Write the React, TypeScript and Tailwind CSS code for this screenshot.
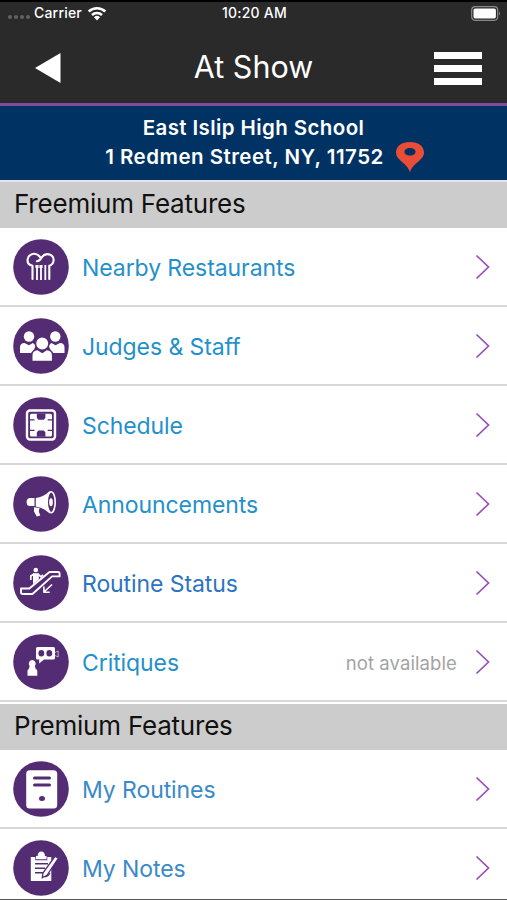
import type { ReactNode } from "react";

type Feature = { label: string; icon: ReactNode; color: string; note?: string };

const PURPLE = "#542c74";

const ChefHat = (
  <g fill="none" stroke="#fff" strokeWidth="2.100" strokeLinecap="round" strokeLinejoin="round">
    <path d="M19.500 40V26.800c-3.300-.7-5.300-3.200-4.900-6.500.5-4.300 5.400-6.600 9.200-4.900 1.700.8 2.800 2 3.700 3.300" />
    <path d="M23.800 22.300c2.600.2 3.700-1.800 5-4 1.400-2.300 3.500-3.300 5.900-3.200 3.800.2 6.200 3 5.900 6.200-.2 2.800-2 4.800-4.300 5.500V40" />
    <path d="M24 27v14M28 27v14M32.300 26v15" strokeWidth="1.800" strokeLinecap="butt" />
    <path d="M22.400 27.500h3.200M26.400 27.500h3.200" strokeWidth="3" strokeLinecap="butt" />
  </g>
);

const People = (
  <g fill="#fff">
    <circle cx="16" cy="18.500" r="5.200" />
    <circle cx="42.300" cy="18.500" r="5.200" />
    <path d="M7 35v-5.500Q7 25 11.500 25l4.500 2.200 3.800-2.200 3 2.200-1.500 3.800-3.300 4Z" />
    <path d="M51.500 35v-5.500q0-4.500-4.500-4.500l-4.500 2.200-4-2.200-3 2.200 1.500 3.800 3.500 4Z" />
    <circle cx="29.200" cy="25.500" r="6.800" stroke={PURPLE} strokeWidth="1.600" />
    <path d="M19.500 42.800v-5.300q0-5 5-5.300l4.700 3 4.700-3q5 .3 5 5.300v5.300Z" />
  </g>
);

const Board = (
  <g>
    <rect x="14" y="13.500" width="28" height="29" rx="3" fill="none" stroke="#fff" strokeWidth="2.400" />
    <rect x="17" y="16.800" width="22" height="22.600" rx="1.500" fill="#fff" />
    <path d="M23.800 16.500h8.600v4.200l-1.500 2h-5.600l-1.500-2ZM23.800 39.700h8.600v-4.200l-1.500-2h-5.600l-1.500 2Z" fill={PURPLE} />
    <path d="M17 22.800h4.500M39.200 22.800h-4.500M17 33.400h4.500M39.200 33.400h-4.500" fill="none" stroke={PURPLE} strokeWidth="1.200" />
  </g>
);

const Megaphone = (
  <g fill="#fff">
    <path d="M16 22h5.500v8H16q-2.500-1-2.500-4t2.500-4Z" />
    <path d="M22.800 22q7.500-.8 14-7v22.500q-6.500-6-14-7Z" />
    <path d="M21 31.200l5.500.8-.7 3.500 1.500 4-3.500 1-2.800-5Z" />
    <ellipse cx="38.200" cy="26.200" rx="4" ry="10.500" stroke="#fff" strokeWidth="1.600" fill={PURPLE} />
    <ellipse cx="38" cy="26.200" rx="1.800" ry="4" />
  </g>
);

const Escalator = (
  <g fill="none" stroke="#fff" strokeWidth="1.900" strokeLinejoin="round">
    <path d="M8 33.500h8.300L36.500 17H45q1.600 0 1.600 1.800v2.600h-7.500L19.500 39H10q-2 0-2-1.800Z" />
    <circle cx="22.800" cy="15" r="2.300" fill="#fff" stroke="none" />
    <path d="M20 18.300h5.800v6.200L20 29.300Z" fill="#fff" stroke="none" />
    <path d="M21 19l-3.200 2v4M25 19l2.800 2.800 2.200-2" strokeWidth="1.700" />
    <path d="M39 29.500l-8 7.500M30.900 31.500v5.700h5.800" strokeWidth="1.600" />
  </g>
);

const Critique = (
  <g>
    <path d="M24.500 13h16q1.500 0 1.500 1.500V24q0 1.500-1.500 1.500H31l-4.800 4v-4h-1.700Q23 25.500 23 24v-9.500Q23 13 24.500 13Z" fill="#fff" />
    <ellipse cx="28.300" cy="19.300" rx="2.900" ry="3.200" fill={PURPLE} />
    <ellipse cx="36.300" cy="19.300" rx="2.900" ry="3.200" fill={PURPLE} />
    <path d="M42 18.500l3.200-1.500v6L42 21.500" fill="none" stroke="#c8b9d2" strokeWidth=".9" />
    <path d="M19 26a3.700 3.700 0 0 1 2.900 6l.5 2.300 1.900 2.300v5.200h-9.800v-5.200l1.700-2.300.4-2.300A3.700 3.700 0 0 1 19 26Z" fill="#fff" />
  </g>
);

const Tower = (
  <g>
    <rect x="13.200" y="9.300" width="31" height="38.200" rx="3.500" fill="#fff" />
    <path d="M21.500 17h15M21.500 24h15" stroke={PURPLE} strokeWidth="3" strokeLinecap="round" />
    <ellipse cx="29" cy="37.500" rx="3" ry="2.500" fill={PURPLE} />
  </g>
);

const Notes = (
  <g>
    <path d="M17.800 17h4.500v3.200h12V17h4v24H17.800Z" fill="#fff" />
    <path d="M23 19.200V16h1.800a3.600 3.600 0 1 1 7 0h1.800v3.200Z" fill="#fff" />
    <path d="M22 23.800h13M22 28.200h10M22 32.700h8" stroke={PURPLE} strokeWidth="1.500" />
    <path d="M45.500 18L33.800 35.500l-4.500 2.200.6-4.600L41.800 16.500Z" fill="#fff" stroke={PURPLE} strokeWidth="1.300" />
    <path d="M31.500 36.500q3 1 5.500-3.500" stroke={PURPLE} strokeWidth="1.300" fill="none" />
  </g>
);

const freemium: Feature[] = [
  { label: "Nearby Restaurants", icon: ChefHat, color: "text-[#2490cb]" },
  { label: "Judges & Staff", icon: People, color: "text-[#2490cb]" },
  { label: "Schedule", icon: Board, color: "text-[#2490cb]" },
  { label: "Announcements", icon: Megaphone, color: "text-[#2490cb]" },
  { label: "Routine Status", icon: Escalator, color: "text-[#2d74c0]" },
  { label: "Critiques", icon: Critique, color: "text-[#2490cb]", note: "not available" },
];

const premium: Feature[] = [
  { label: "My Routines", icon: Tower, color: "text-[#3a8ac7]" },
  { label: "My Notes", icon: Notes, color: "text-[#3a8ac7]" },
];

function FeatureRow({ label, icon, color, note }: Feature) {
  return (
    <button type="button" className="flex h-[79px] w-full shrink-0 items-center border-b-2 border-[#d8d8d8] bg-white pr-[17px] pl-[13px] text-left">
      <svg viewBox="0 0 56 56" className="size-14 shrink-0" aria-hidden="true">
        <circle cx="28" cy="28" r="27.800" fill={PURPLE} />
        {icon}
      </svg>
      <span className={`ml-[13px] flex-1 pt-[3px] text-[23px] leading-[30px] tracking-[-0.08px] whitespace-nowrap ${color}`}>{label}</span>
      {note && <span className="mr-[18px] pt-[2px] text-[18.500px] leading-6 tracking-[0.1px] text-[#a3a3a3]">{note}</span>}
      <svg viewBox="0 0 15 26" className="h-[26px] w-[15px]" fill="none" stroke="#984fb5" strokeWidth="1.700" aria-hidden="true">
        <path d="M1.500 1.500L13.500 13L1.500 24.500" />
      </svg>
    </button>
  );
}

function SectionTitle({ children }: { children: ReactNode }) {
  return (
    <h2 className="flex h-[46px] shrink-0 items-center bg-[#cccccc] pb-[2px] pl-[14px] text-[26px] leading-8 tracking-[-0.22px] text-[#111]">
      {children}
    </h2>
  );
}

export default function App() {
  return (
    <div className="flex h-[900px] w-[507px] flex-col overflow-hidden border-b border-[#555] bg-white font-['Inter',sans-serif]">
      <header className="flex h-[106px] shrink-0 flex-col border-t-2 border-b-[3px] border-t-black border-b-[#824c9c] bg-[#2a2a2a] text-white">
        <div className="grid h-[22px] shrink-0 grid-cols-3 items-center pr-[6px] pl-2 text-[14px] leading-5 font-medium tracking-[0.2px]">
          <div className="flex items-center">
            <span className="flex gap-[2px] pt-[7px]">
              {[0, 1, 2, 3].map((i) => (
                <span key={i} className="size-[4px] rounded-full bg-[#626262]" />
              ))}
            </span>
            <span className="ml-[4px]">Carrier</span>
            <svg viewBox="0 0 20 15" className="ml-[5px] h-[15px] w-5" fill="none" stroke="#fff" strokeWidth="2.500" aria-hidden="true">
              <path d="M1.700 5.500a12 12 0 0 1 16.600 0M5 9a7.200 7.200 0 0 1 10 0" />
              <path d="M10 14.500l-3-3.200a4.300 4.300 0 0 1 6 0Z" fill="#fff" stroke="none" />
            </svg>
          </div>
          <span className="text-center">10:20 AM</span>
          <svg viewBox="0 0 30 15" className="h-[15px] w-[30px] justify-self-end" aria-hidden="true">
            <rect x=".7" y=".7" width="26" height="13.600" rx="3.500" fill="none" stroke="#8a8a8a" strokeWidth="1.200" />
            <rect x="2.500" y="2.500" width="22.400" height="10" rx="1.800" fill="#fff" />
            <path d="M28 5.500q2 2 0 4Z" fill="#8a8a8a" />
          </svg>
        </div>
        <div className="flex flex-1 items-center justify-between pt-[8px] pr-[25px] pl-[35px]">
          <button type="button" aria-label="Back" className="w-[38px]">
            <svg viewBox="0 0 26 30" className="h-[30px] w-[26px]">
              <path d="M0 15L25.500 0v30Z" fill="#fff" />
            </svg>
          </button>
          <h1 className="pb-[2px] text-[30.500px] leading-9 font-normal">At Show</h1>
          <button type="button" aria-label="Menu" className="flex w-12 flex-col gap-[6px] pt-px">
            <span className="h-[7px] bg-white" />
            <span className="h-[7px] bg-white" />
            <span className="h-[7px] bg-white" />
          </button>
        </div>
      </header>

      <div className="flex h-[76px] shrink-0 flex-col items-center border-b-2 border-[#e2e6ec] bg-[#003264] pt-[7px] text-[20.500px] leading-[29px] font-semibold whitespace-nowrap text-white">
        <p className="tracking-[0.4px]">East Islip High School</p>
        <p className="flex h-[29px] items-center pl-[23px] tracking-[0.48px]">
          1 Redmen Street, NY, 11752
          <svg viewBox="0 0 30 32" className="ml-[11px] h-8 w-[30px]" aria-hidden="true">
            <path d="M15 1C23 1 29 5 29 11.500c0 8-11.500 10.500-14 20-2.500-9.500-14-12-14-20C1 5 7 1 15 1Zm0 6c-3.300 0-5.500 1.700-5.500 3.800s2.200 3.800 5.500 3.800 5.500-1.700 5.500-3.800S18.300 7 15 7Z" fill="#e94d37" />
          </svg>
        </p>
      </div>

      <main className="flex flex-col">
        <SectionTitle>Freemium Features</SectionTitle>
        {freemium.map((f) => (
          <FeatureRow key={f.label} {...f} />
        ))}
        <div className="h-[2px] shrink-0 bg-white" />
        <SectionTitle>Premium Features</SectionTitle>
        {premium.map((f) => (
          <FeatureRow key={f.label} {...f} />
        ))}
      </main>
    </div>
  );
}
